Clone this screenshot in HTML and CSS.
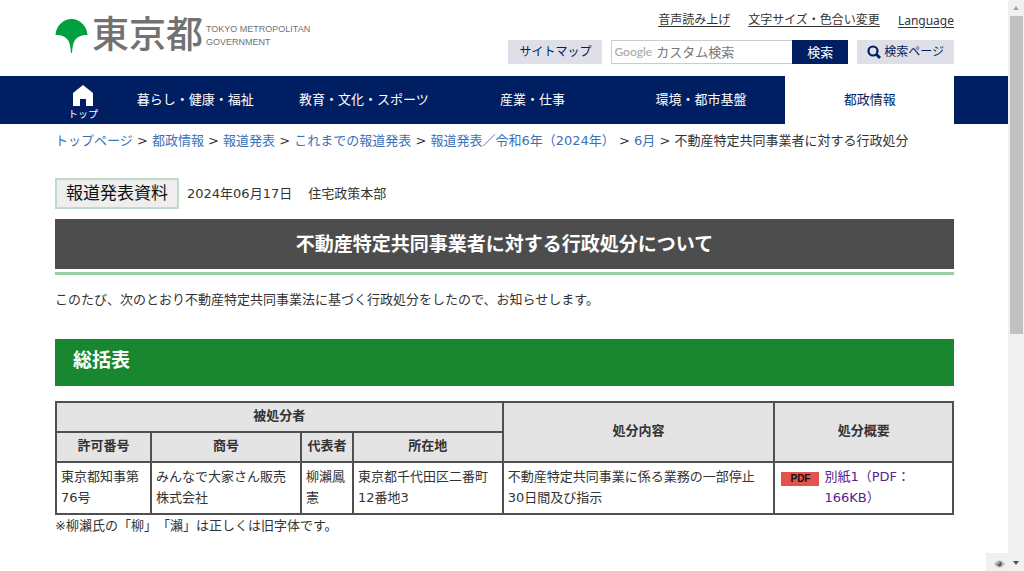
FILE: index.html
```html
<!DOCTYPE html>
<html lang="ja">
<head>
<meta charset="utf-8">
<title>不動産特定共同事業者に対する行政処分について|東京都</title>
<link rel="stylesheet" href="styles.css">
</head>
<body>
<div class="viewport">
  <div class="page">
    <header class="header">
      <a class="logo" href="#">
        <svg class="logo-mark" viewBox="0 0 33 34" aria-hidden="true"><path d="M0.500 16C1 7 8 0 16.500 0S32 7 32.500 16C28 15.500 23 17 20 21C18 24 17.500 28 17 34H16C15.500 28 15 24 13 21C10 17 5 15.500 0.500 16Z" fill="#00a040"/></svg>
        <span class="logo-name">東京都</span>
        <span class="logo-en">TOKYO METROPOLITAN<br>GOVERNMENT</span>
      </a>
      <div class="tools">
        <div class="tool-links">
          <a href="#">音声読み上げ</a>
          <a href="#">文字サイズ・色合い変更</a>
          <a class="latin" href="#">Language</a>
        </div>
        <form class="search">
          <a class="pale-button sitemap" href="#">サイトマップ</a>
          <div class="search-box">
            <label class="google" for="q">Google</label>
            <input id="q" type="text" placeholder="カスタム検索">
            <button type="button">検索</button>
          </div>
          <a class="pale-button" href="#">
            <svg class="lens" viewBox="0 0 14 14" aria-hidden="true"><circle cx="6" cy="6" r="4.500" fill="none" stroke="#001e62" stroke-width="2.200"/><path d="M9.500 9.500L13 13" stroke="#001e62" stroke-width="2.800"/></svg>
            検索ページ
          </a>
        </form>
      </div>
    </header>
    <nav class="nav">
      <a class="nav-top" href="#">
        <svg class="home" viewBox="0 0 20 21" aria-hidden="true"><path d="M10 0L20 8V21H13V14H7V21H0V8Z" fill="#fff"/></svg>
        トップ
      </a>
      <a href="#">暮らし・健康・福祉</a>
      <a href="#">教育・文化・スポーツ</a>
      <a href="#">産業・仕事</a>
      <a href="#">環境・都市基盤</a>
      <a class="current" href="#">都政情報</a>
    </nav>
    <main class="content">
      <p class="crumbs"><a href="#">トップページ</a> &gt; <a href="#">都政情報</a> &gt; <a href="#">報道発表</a> &gt; <a href="#">これまでの報道発表</a> &gt; <a href="#">報道発表&#xFF0F;令和6年&#xFF08;2024年&#xFF09;</a> &gt; <a href="#">6月</a> &gt; 不動産特定共同事業者に対する行政処分</p>
      <div class="meta">
        <span class="tag">報道発表資料</span>
        <span>2024年06月17日</span>
        <span class="bureau">住宅政策本部</span>
      </div>
      <h1 class="title">不動産特定共同事業者に対する行政処分について</h1>
      <p class="lead">このたび、次のとおり不動産特定共同事業法に基づく行政処分をしたので、お知らせします。</p>
      <h2 class="section">総括表</h2>
      <table class="summary">
        <colgroup><col class="c-number"><col class="c-wide"><col class="c-name"><col class="c-wide"><col class="c-detail"><col></colgroup>
        <thead>
          <tr><th colspan="4">被処分者</th><th rowspan="2">処分内容</th><th rowspan="2">処分概要</th></tr>
          <tr><th>許可番号</th><th>商号</th><th>代表者</th><th>所在地</th></tr>
        </thead>
        <tbody>
          <tr>
            <td>東京都知事第76号</td>
            <td>みんなで大家さん販売株式会社</td>
            <td>柳瀨鳳憲</td>
            <td>東京都千代田区二番町12番地3</td>
            <td>不動産特定共同事業に係る業務の一部停止30日間及び指示</td>
            <td><a class="pdf" href="#"><span class="pdf-icon">PDF</span><span>別紙1&#xFF08;PDF&#xFF1A;<wbr>166KB&#xFF09;</span></a></td>
          </tr>
        </tbody>
      </table>
      <p class="note">※柳瀨氏の「柳」「瀨」は正しくは旧字体です。</p>
    </main>
    <button class="eye" type="button" aria-label="表示">
      <svg viewBox="0 0 12 8" aria-hidden="true"><path d="M0 4Q6-4 12 4Q6 12 0 4Z" fill="#bbb"/><circle cx="6" cy="4" r="2.500" fill="#555"/><circle cx="5" cy="3" r="1" fill="#ddd"/></svg>
    </button>
  </div>
  <div class="scrollbar">
    <svg viewBox="0 0 16 16" aria-hidden="true"><path d="M5 10L8 6L11 10Z" fill="#a3a3a3"/></svg>
    <div class="track"><div class="thumb"></div></div>
    <svg viewBox="0 0 16 16" aria-hidden="true"><path d="M5 6L8 10L11 6Z" fill="#505050"/></svg>
  </div>
</div>
</body>
</html>
```
FILE: styles.css
```css
* { box-sizing: border-box; }
body {
  margin: 0;
  background: #fff;
  color: #333;
  font: 13px/21px "DejaVu Sans", "Noto Sans CJK JP", sans-serif;
  text-spacing-trim: space-all;
}
p, h1, h2 { margin: 0; }
.viewport { display: flex; height: 100vh; overflow: hidden; }
.page { position: relative; flex: 1; min-width: 0; }

.header {
  display: flex;
  justify-content: space-between;
  height: 76px;
  padding: 0 54px 0 55px;
}
.logo {
  display: flex;
  align-items: center;
  height: 72px;
  color: #727272;
  text-decoration: none;
}
.logo-mark { width: 33px; height: 34px; margin-right: 4px; }
.logo-name { margin-right: 3px; font-size: 37px; line-height: 40px; font-weight: 500; }
.logo-en { font: 9px/13px "Liberation Sans Narrow", "Liberation Sans", sans-serif; }
.tools { display: flex; flex-direction: column; align-items: flex-end; padding-top: 10px; gap: 9px; }
.tool-links { display: flex; gap: 18px; font-size: 12px; }
.tool-links a { color: #333; text-underline-offset: 2px; }
.tool-links .latin { font-family: "Noto Sans", sans-serif; }
.search { display: flex; gap: 9px; }
.pale-button {
  display: flex;
  align-items: center;
  gap: 3px;
  height: 24px;
  padding: 0 9px;
  background: #dfe0e7;
  color: #001e62;
  font-size: 12px;
  text-decoration: none;
}
.pale-button:last-child { padding: 0 10px; }
.sitemap { padding: 0 11px; }
.lens { width: 14px; height: 14px; }
.search-box { display: flex; height: 24px; border: 1px solid #ccc; border-right: 0; }
.google { padding-left: 2px; color: #aaa; font: 500 12px/22px Lato, sans-serif; }
.search-box input {
  width: 140px;
  padding: 0 0 0 4px;
  border: 0;
  font: 13px/22px "Noto Sans CJK JP", sans-serif;
}
.search-box input::placeholder { color: #777; opacity: 1; }
.search-box button {
  width: 56px;
  margin: -1px 0;
  padding: 0;
  border: 0;
  background: #001e62;
  color: #fff;
  font: 13px/24px "Noto Sans CJK JP", sans-serif;
}

.nav { display: flex; height: 48px; padding: 0 54px 0 55px; background: #001e62; }
.nav a {
  display: flex;
  flex: 1;
  align-items: center;
  justify-content: center;
  padding-bottom: 2px;
  color: #fff;
  text-decoration: none;
}
.nav .nav-top { flex: 0 0 56px; flex-direction: column; justify-content: flex-end; padding: 0; font-size: 10px; line-height: 18px; }
.home { width: 20px; height: 21px; }
.nav .current { background: #fff; color: #001e62; }

.content { padding: 6px 54px 0 55px; }
.crumbs a { color: #3b71b8; text-decoration: none; }
.meta { display: flex; align-items: center; gap: 8px; margin-top: 27px; }
.bureau { margin-left: 8px; }
.tag {
  padding: 1px 9px;
  border: 2px solid #bfdcc9;
  background: #eee;
  color: #111;
  font-size: 17px;
  line-height: 25px;
}
.title {
  margin: 10px 0 3px;
  padding: 12px 18px;
  background: #4d4d4d;
  color: #fff;
  font-size: 19px;
  line-height: 26px;
  text-align: center;
}
.lead { padding-top: 14px; border-top: 3px solid #99cfa9; }
.section {
  margin: 29px 0 15px;
  padding: 8px 18px 13px;
  background: #18872f;
  color: #fff;
  font-size: 19px;
  line-height: 26px;
}
.summary { width: 100%; border-collapse: collapse; table-layout: fixed; }
.summary th, .summary td { border: 2px solid #505050; padding: 3px 4px 5px; }
.summary th { background: #e4e4e4; line-height: 20px; }
.summary td { vertical-align: top; }
.c-number { width: 10.6%; }
.c-wide { width: 16.7%; }
.c-name { width: 5.8%; }
.c-detail { width: 30.3%; }
.pdf { display: flex; gap: 5px; color: #59218f; text-decoration: none; }
.pdf-icon {
  align-self: flex-start;
  flex: none;
  width: 38px;
  margin: 6px 0 0 2px;
  padding-left: 9px;
  background: #e2534c;
  color: #111;
  font: bold 10px/14px "Liberation Sans Narrow", "Liberation Sans", sans-serif;
}
.eye {
  position: absolute;
  right: 0;
  bottom: 0;
  display: flex;
  align-items: center;
  justify-content: center;
  width: 22px;
  height: 18px;
  padding: 3px 0 0 4px;
  border: 0;
  background: #f0f0f0;
}
.eye svg { width: 11px; height: 8px; }

.scrollbar { display: flex; flex: 0 0 16px; flex-direction: column; background: #f1f1f1; }
.scrollbar svg { width: 16px; height: 16px; }
.track { flex: 1; padding-left: 2px; }
.thumb { width: 13px; height: 59%; background: #c1c1c1; }
```
